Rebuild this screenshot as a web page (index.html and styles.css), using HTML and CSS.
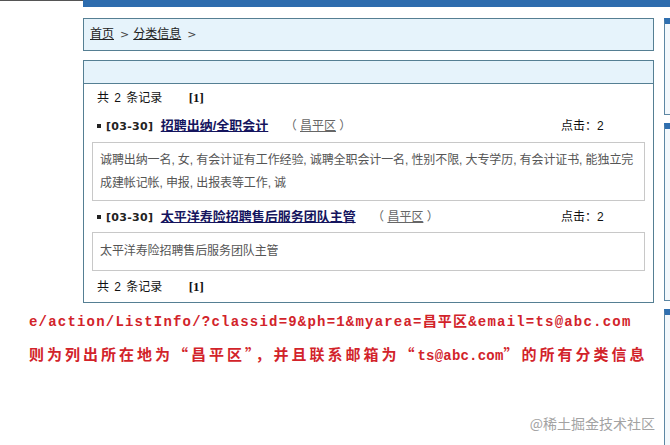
FILE: index.html
```html
<!DOCTYPE html>
<html lang="zh-CN">
<head>
  <meta charset="UTF-8">
  <meta name="viewport" content="width=device-width, initial-scale=1.0">
  <title>分类信息</title>
  <link rel="stylesheet" href="styles.css">
</head>
<body>
  <div class="topbar">
    <div class="topbar-left"></div>
    <div class="topbar-right"></div>
  </div>

  <div class="page">
    <div class="main">
      <div class="crumb">
        <a href="#">首页</a><span class="sep">&gt;</span><a href="#">分类信息</a><span class="sep">&gt;</span>
      </div>

      <div class="listbox">
        <div class="listbox-head"></div>
        <div class="listbox-body">
          <div class="count">共 2 条记录 <b>[1]</b></div>

          <div class="item">
            <div class="item-head">
              <span class="item-title">
                <span class="dot"></span><b class="date">[03-30]</b>
                <a class="title-link" href="#">招聘出纳/全职会计</a>
                <span class="area">（ <a href="#">昌平区</a> ）</span>
              </span>
              <span class="hits">点击：2</span>
            </div>
            <div class="item-desc">诚聘出纳一名, 女, 有会计证有工作经验, 诚聘全职会计一名, 性别不限, 大专学历, 有会计证书, 能独立完成建帐记帐, 申报, 出报表等工作, 诚</div>
          </div>

          <div class="item">
            <div class="item-head">
              <span class="item-title">
                <span class="dot"></span><b class="date">[03-30]</b>
                <a class="title-link" href="#">太平洋寿险招聘售后服务团队主管</a>
                <span class="area">（ <a href="#">昌平区</a> ）</span>
              </span>
              <span class="hits">点击：2</span>
            </div>
            <div class="item-desc">太平洋寿险招聘售后服务团队主管</div>
          </div>

          <div class="count count-bottom">共 2 条记录 <b>[1]</b></div>
        </div>
      </div>
    </div>

    <div class="side">
      <div class="side-box box-a"></div>
      <div class="side-box box-b"></div>
      <div class="side-box box-c"></div>
    </div>
  </div>

  <div class="note">
    <div class="note-url">e/action/ListInfo/?classid=9&amp;ph=1&amp;myarea=昌平区&amp;email=ts@abc.com</div>
    <div class="note-desc">则为列出所在地为“昌平区”，并且联系邮箱为“<span class="ascii">ts@abc.com</span>”的所有分类信息</div>
  </div>

  <div class="watermark">@稀土掘金技术社区</div>
</body>
</html>
```

FILE: styles.css
```css
body {
  margin: 0;
  padding: 0;
  background: #fff;
  font-family: "Liberation Sans", "Noto Sans CJK SC", sans-serif;
  font-size: 12px;
  color: #222;
  overflow: hidden;
  height: 445px;
  position: relative;
}
a {
  color: #222;
}
.topbar {
  display: flex;
  height: 7px;
}
.topbar-left {
  width: 83px;
  border-top: 1px solid #555;
}
.topbar-right {
  flex: 1;
  background: #2d6cae;
}
.page {
  display: flex;
  align-items: flex-start;
  gap: 10px;
  margin-left: 83px;
  margin-top: 11px;
}
.main {
  width: 571px;
  flex-shrink: 0;
}
.crumb {
  height: 31px;
  line-height: 31px;
  padding-left: 6px;
  background: #e6f3fb;
  border: 1px solid #557f93;
  color: #333;
}
.sep {
  margin: 0 4px 0 6px;
  font-family: "DejaVu Sans", sans-serif;
  font-size: 11px;
  color: #444;
}
.listbox {
  margin-top: 9px;
  border: 1px solid #557f93;
}
.listbox-head {
  height: 22px;
  background: #e6f3fb;
  border-bottom: 1px solid #557f93;
}
.listbox-body {
  padding: 2px 8px 3px 8px;
}
.count {
  height: 24px;
  line-height: 24px;
  padding-left: 5px;
  color: #111;
  word-spacing: 2px;
}
.count b {
  margin-left: 21px;
  font-family: "Liberation Serif", serif;
  font-size: 13px;
}
.count-bottom {
  margin-top: 4px;
}
.item {
  margin-top: 4px;
}
.item-head {
  display: flex;
  height: 24px;
  line-height: 24px;
  padding-left: 5px;
}
.item-title {
  flex: 1;
  white-space: nowrap;
}
.dot {
  display: inline-block;
  width: 4px;
  height: 4px;
  background: #222;
  vertical-align: middle;
  margin-right: 5px;
  position: relative;
  top: -1px;
}
.date {
  font-family: "DejaVu Sans", sans-serif;
  font-size: 11px;
  letter-spacing: 0.3px;
}
.title-link {
  margin-left: 4px;
  font-size: 13px;
  font-weight: bold;
  color: #15155e;
}
.area {
  margin-left: 13px;
  color: #666;
}
.area a {
  color: #666;
}
.hits {
  width: 84px;
  color: #111;
}
.item-desc {
  margin-top: 4px;
  border: 1px solid #c8c8c8;
  padding: 6px 8px 5px 7px;
  line-height: 23px;
  color: #555;
  letter-spacing: -0.1px;
}
.item + .item .item-desc {
  margin-top: 3px;
  padding-top: 7px;
  padding-bottom: 7px;
}
.side {
  display: flex;
  flex-direction: column;
  gap: 8px;
  width: 200px;
  height: 285px;
  flex-shrink: 0;
}
.side-box {
  flex-shrink: 0;
  border: 1px solid #5d87a3;
  border-top: 6px solid #2f6fb0;
  background: #f3f8fc;
}
.box-a {
  height: 90px;
}
.box-b {
  height: 171px;
}
.box-c {
  height: 200px;
}
.note {
  margin-top: 3px;
  padding-left: 29px;
  color: #d2232a;
  font-weight: bold;
  line-height: 31px;
}
.note-url {
  padding-top: 1px;
  font-family: "Liberation Mono", "Noto Sans CJK SC", monospace;
  font-size: 14px;
  letter-spacing: 1.2px;
}
.note-desc {
  font-family: "Noto Sans CJK SC", sans-serif;
  font-size: 15px;
  letter-spacing: 3px;
}
.note-desc .ascii {
  font-family: "Liberation Mono", monospace;
  font-size: 14px;
  letter-spacing: 0.2px;
}
.watermark {
  position: absolute;
  right: 15px;
  bottom: 12px;
  color: #a3a3a3;
  font-family: "Noto Sans CJK SC", sans-serif;
  font-size: 14px;
}
```
